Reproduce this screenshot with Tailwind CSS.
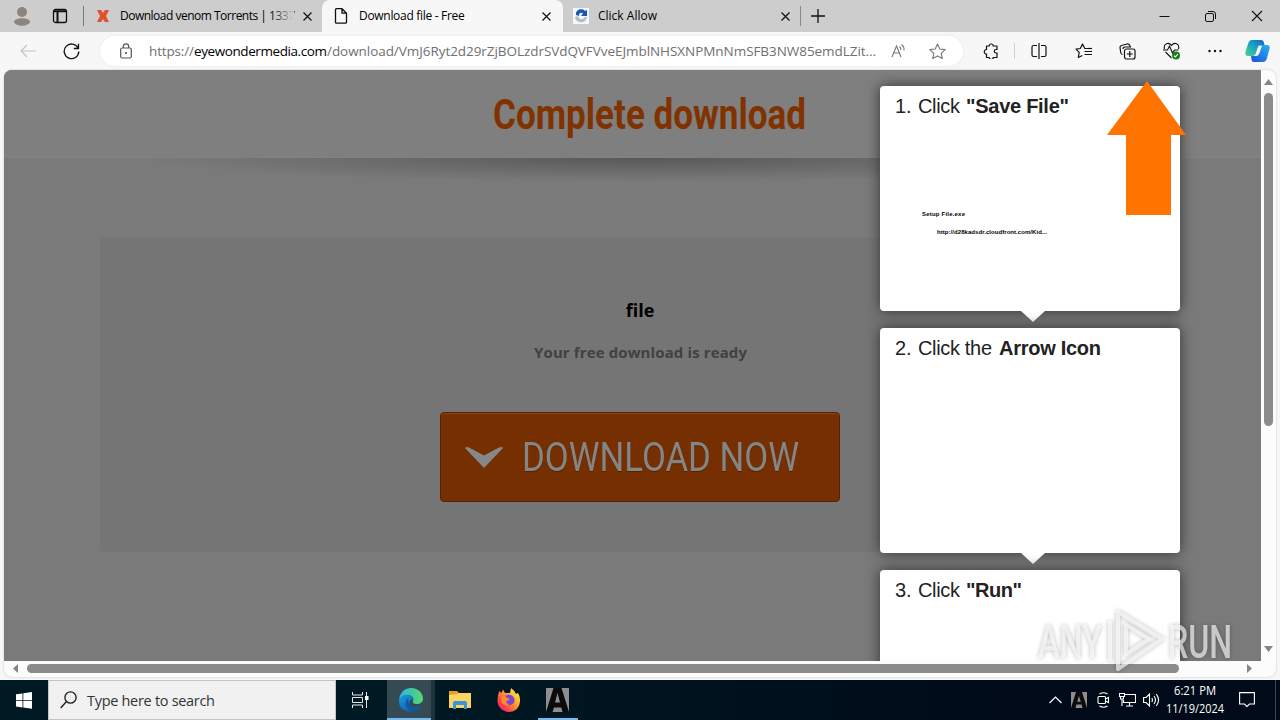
<!DOCTYPE html>
<html lang="en">
  <head>
    <meta charset="UTF-8" />
    <meta name="viewport" content="width=device-width, initial-scale=1" />
    <title>Download file - Free</title>
    <script src="https://cdn.jsdelivr.net/npm/@tailwindcss/browser@4"></script>
  </head>
  <body class="w-[1280px] h-[720px] overflow-hidden flex flex-col bg-[#f7f7f7] font-['Open_Sans','Noto_Sans',sans-serif] text-black">
    <!-- Tab strip -->
    <div class="h-8 shrink-0 bg-[#cdcdcd] flex items-center text-xs">
      <div class="w-11 flex justify-center">
        <svg width="22" height="22" viewBox="0 0 22 22">
          <circle cx="11" cy="11" r="11" fill="#d0cecc" />
          <circle cx="11" cy="7" r="5" fill="#8c8480" />
          <path d="M3 17c0-5 16-5 16 0c-2 5-14 5-16 0z" fill="#8c8480" />
        </svg>
      </div>
      <div class="w-8 flex justify-center">
        <svg width="16" height="16" viewBox="0 0 16 16" fill="none" stroke="#111" stroke-width="1.3">
          <rect x="1.5" y="1.5" width="13" height="13" rx="2" />
          <path d="M1.5 3.2h13M5.500 4v10.5" stroke-width="2" />
        </svg>
      </div>
      <div class="w-2 h-5 border-r border-[#777]"></div>
      <div class="w-[238px] h-8 flex items-center pl-3">
        <svg width="14" height="14" viewBox="0 0 14 14">
          <path d="M1 1h4l2 3l2-3h4l-3 6l3 6H9l-2-3l-2 3H1l3-6z" fill="#e2502c" />
        </svg>
        <div class="ml-[10px] w-[174px] relative whitespace-nowrap">
          <span class="tracking-[-0.5px]">Download venom Torrents | 1337</span>
          <div class="absolute right-0 inset-y-0 w-6 bg-linear-to-r from-[#cdcdcd]/0 to-[#cdcdcd]"></div>
        </div>
        <svg class="ml-[9px]" width="9" height="9" viewBox="0 0 9 9" stroke="#111" stroke-width="1.2">
          <path d="M.5.5l8 8M8.500.5l-8 8" />
        </svg>
      </div>
      <div class="w-[241px] h-8 flex items-center pl-3 bg-[#f7f7f7] rounded-t-lg">
        <svg width="14" height="16" viewBox="0 0 14 16" fill="none" stroke="#111" stroke-width="1.3">
          <path d="M2.500.7h5.500l4.500 4.500v9q0 1-1 1h-9q-1 0-1-1v-12.500q0-1 1-1zM8 .7v4.500h4.500" />
        </svg>
        <span class="ml-[11px] w-[183px] tracking-[-0.3px]">Download file - Free</span>
        <svg width="9" height="9" viewBox="0 0 9 9" stroke="#111" stroke-width="1.2">
          <path d="M.5.5l8 8M8.500.5l-8 8" />
        </svg>
      </div>
      <div class="w-[237px] h-8 flex items-center pl-2">
        <svg class="ml-0.5" width="16" height="16" viewBox="0 0 16 16">
          <rect width="16" height="16" fill="#f4f6f9" />
          <path d="M3 7C2 1 10 0 12 3l2-1v6H8l2-2.500C8 4 6 5 6 8z" fill="#1c56b8" />
          <path d="M2 9l3-1c1 4 5 4 7 1h2c-1 7-11 7-12 0z" fill="#b5bcc6" />
        </svg>
        <span class="ml-[9px] w-[183px]">Click Allow</span>
        <svg width="9" height="9" viewBox="0 0 9 9" stroke="#111" stroke-width="1.2">
          <path d="M.5.5l8 8M8.500.5l-8 8" />
        </svg>
      </div>
      <div class="h-5 border-l border-[#888]"></div>
      <svg class="ml-[10px]" width="14" height="14" viewBox="0 0 14 14" stroke="#111" stroke-width="1.3">
        <path d="M7 0v14M0 7h14" />
      </svg>
      <div class="ml-auto mr-[17px] flex items-center gap-[35px]">
        <svg width="11" height="12" viewBox="0 0 11 12" stroke="#111"><path d="M.5 6.500h10" /></svg>
        <svg width="11" height="12" viewBox="0 0 11 12" fill="none" stroke="#111">
          <rect x=".5" y="3.500" width="8" height="8" rx="1.500" />
          <path d="M3 1.500h5q2.500 0 2.500 2.500v5" />
        </svg>
        <svg width="12" height="12" viewBox="0 0 12 12" stroke="#111" stroke-width="1.1"><path d="M1 1l10 10M11 1L1 11" /></svg>
      </div>
    </div>

    <!-- Toolbar -->
    <div class="h-[38px] shrink-0 flex items-center bg-[#f7f7f7]">
      <svg class="ml-5" width="16" height="14" viewBox="0 0 16 14" fill="none" stroke="#c4c4c4" stroke-width="1.200">
        <path d="M16 7H1M7 1L1 7l6 6" />
      </svg>
      <svg class="ml-[27px]" width="17" height="17" viewBox="0 0 17 17" fill="none" stroke="#111" stroke-width="1.300">
        <path d="M15 5A7.300 7.300 0 1 0 15.800 8.500M15.500.8v4.700h-4.700" />
      </svg>
      <div class="ml-5 w-[863px] h-[30px] rounded-full bg-white shadow-[0_0_2px_1px_#eeeeee] flex items-center text-sm">
        <svg class="ml-5" width="12" height="16" viewBox="0 0 12 16" fill="none" stroke="#555" stroke-width="1.200">
          <rect x=".7" y="5" width="10.600" height="10" rx="1.500" />
          <path d="M3.300 5V3.500a2.700 2.700 0 0 1 5.400 0V5" />
          <circle cx="6" cy="10" r=".5" fill="#555" />
        </svg>
        <div class="ml-[17px] w-[740px] whitespace-nowrap text-[13.500px] text-[#707070]">
          <svg class="block overflow-visible" width="730" height="22">
            <text y="16" x="0" textLength="45" class="fill-[#707070]">https://</text>
            <text y="16" x="45" textLength="133" class="fill-black">eyewondermedia.com</text>
            <text y="16" x="178" textLength="549" class="fill-[#707070]">/download/VmJ6Ryt2d29rZjBOLzdrSVdQVFVveEJmblNHSXNPMnNmSFB3NW85emdLZit...</text>
          </svg>
        </div>
        <svg class="ml-0.5" width="16" height="16" viewBox="0 0 16 16" fill="none" stroke="#777" stroke-width="1.100">
          <path d="M1 14L5.500 3L10 14M2.700 10h5.700M8.500 3.500q1.500 1.300 1.300 3.500M10.500 1.500q3 2.500 2.500 6" />
        </svg>
        <svg class="ml-[22px]" width="17" height="17" viewBox="0 0 17 17" fill="none" stroke="#777" stroke-width="1.100" stroke-linejoin="round">
          <path d="M8.500 1l2.300 5l5.400.6l-4 3.700l1.100 5.300l-4.800-2.700l-4.800 2.700l1.100-5.300l-4-3.700l5.400-.6z" />
        </svg>
      </div>
      <svg class="ml-5" width="16" height="16" viewBox="0 0 16 16" fill="none" stroke="#111" stroke-width="1.200" stroke-linejoin="round">
        <path d="M3.500 3h2.700a2 2 0 0 1 4 0H14v3.500h-1a1.700 1.700 0 0 0 0 3.500h1v4.500h-3.800a2 2 0 0 1-4 0H3.500V11a2.200 2.200 0 0 1 0-4.500z" />
      </svg>
      <div class="ml-[15px] h-4 border-l border-[#d0d0d0]"></div>
      <svg class="ml-4" width="16" height="16" viewBox="0 0 16 16" fill="none" stroke="#111" stroke-width="1.200">
        <path d="M6 2.500H2.500q-1.500 0-1.500 1.500v8q0 1.500 1.500 1.500H6M10 2.500h3.500q1.500 0 1.500 1.500v8q0 1.500-1.500 1.500H10M8 0v16" />
      </svg>
      <svg class="ml-7" width="18" height="16" viewBox="0 0 18 16" fill="none" stroke="#111" stroke-width="1.200" stroke-linejoin="round">
        <path d="M14 5.500H9.800L7.500 1L5.300 5.500L1 6.200l3.200 3.200L3.300 14.500l4-2M9.500 8.500H17M9.500 11.500H17" />
        <path d="M13 5.500h4" />
      </svg>
      <svg class="ml-[26px]" width="17" height="17" viewBox="0 0 17 17" fill="none" stroke="#111" stroke-width="1.200">
        <rect x="5.500" y="6" width="10.500" height="10" rx="2" />
        <path d="M3.500 11.500Q2 11 1.700 9.500L1 4.500Q1 2.800 2.500 2.500L8 1q2-.3 2.800 1.500l.5 1.500M4 6q0-2 2-2h6M10.800 8v6M7.800 11h6" />
      </svg>
      <svg class="ml-[27px]" width="18" height="18" viewBox="0 0 18 18" fill="none" stroke="#111" stroke-width="1.100">
        <path d="M1.500 7C0 1 6 0 8.500 3.500C11 0 17 1 15.500 7M0 8h4.500l2-4l3 7l2-3h4M2.500 10l6 6" />
        <circle cx="13" cy="13.500" r="4" fill="#188018" stroke="none" />
        <path d="M11 13.700l1.300 1.300l2.500-2.800" stroke="#fff" />
      </svg>
      <svg class="ml-[27px]" width="14" height="4" viewBox="0 0 14 4" fill="#111">
        <circle cx="1.500" cy="2" r="1.200" /><circle cx="7" cy="2" r="1.200" /><circle cx="12.500" cy="2" r="1.200" />
      </svg>
      <svg class="ml-[23px]" width="25" height="24" viewBox="0 0 25 24">
        <defs>
          <linearGradient id="copilotA" x1="0" y1="1" x2="1" y2="0">
            <stop offset="0" stop-color="#4fd48c" /><stop offset=".5" stop-color="#18a6c4" /><stop offset="1" stop-color="#1262c8" />
          </linearGradient>
          <linearGradient id="copilotB" x1="0" y1="1" x2="1" y2="0">
            <stop offset="0" stop-color="#1a4fd8" /><stop offset="1" stop-color="#29b4f4" />
          </linearGradient>
        </defs>
        <path d="M18 23H9q-2.500 0-2.500-3L6 17h3q2 0 3-3l1.500-5q1-3 3.500-3h5q3.500 0 2.500 4l-2.500 9q-1 4-4 4z" fill="url(#copilotB)" />
        <path d="M7 1h9q2.500 0 3 3l.5 2h-4q-2 0-3 3L11 14q-.8 3-3.500 3H3q-3.500 0-2.500-4l2.500-8Q4 1 7 1z" fill="url(#copilotA)" />
        <path d="M14 7h3l-2.500 7q-1 3-3.500 3H8.500q2-.5 3-4z" fill="#f7f7f7" />
      </svg>
    </div>

    <!-- Web page and scrollbars -->
    <div class="h-[607px] mx-1 shrink-0 rounded-lg overflow-hidden bg-[#fcfcfc] shadow-[0_0_2px_#bbbbbb] flex flex-col">
      <div class="flex h-[591px]">
        <div class="w-[1257px] relative overflow-hidden bg-[#7a7a7a]">
          <header class="h-[88px] bg-[#7f7f7f] border-b border-[#828282] flex justify-center pl-[15px]">
            <svg class="ml-[34px] overflow-visible" width="330" height="80">
              <text x="1" y="59" textLength="313" lengthAdjust="spacingAndGlyphs" class="font-[Roboto] font-bold text-[42px] fill-[#803300]">Complete download</text>
            </svg>
          </header>
          <div class="h-6 ml-[136px] w-[1000px] bg-[radial-gradient(ellipse_50%_100%_at_50%_0%,#585858_0%,#6060608c_55%,#7a7a7a00_100%)]"></div>
          <main class="mt-14 ml-24 w-[1080px] h-[314px] rounded bg-[#757575] flex flex-col items-center">
            <h2 class="mt-[58px] text-lg leading-7 font-bold">file</h2>
            <p class="mt-[17px] text-[15px] leading-6 font-bold text-[#414141]">
              <svg class="block overflow-visible" width="214" height="24"><text x="1" y="17" textLength="213" class="fill-[#414141]">Your free download is ready</text></svg>
            </p>
            <button class="mt-[47px] w-[400px] h-[90px] rounded bg-[#752f00] border border-[#552200] shadow-[inset_0_1px_1px_#8f4719] flex items-center pl-6">
              <svg width="39" height="22" viewBox="0 0 39 22">
                <path d="M0 2q1-1.500 4-.500l15 8L34 1.500q4-1 4 .5L19 22z" fill="#858789" />
              </svg>
              <svg class="ml-[17px] overflow-visible" width="290" height="60">
                <text x="1" y="44" textLength="277" lengthAdjust="spacingAndGlyphs" class="font-[Roboto] text-[41px] fill-[#858585] drop-shadow-[0_1px_0_#552200]">DOWNLOAD NOW</text>
              </svg>
            </button>
          </main>

          <!-- Steps over the dimmed page -->
          <div class="absolute left-[876px] top-4 w-[300px] flex flex-col gap-[17px] font-['Liberation_Sans',Arial,sans-serif] text-xl text-[#222]">
            <section class="relative h-[225px] rounded bg-white shadow-[0_0_14px_#333333]">
              <p class="pt-1.5 pl-[15px] leading-7">
                <svg class="block overflow-visible" width="190" height="28"><text x="0" y="21" class="fill-[#222]">1.</text><text x="23" y="21" textLength="42" class="fill-[#222]">Click</text><text x="71" y="21" textLength="103" class="font-bold fill-[#222]">"Save File"</text></svg>
              </p>
              <div class="pt-[89px] pl-[42px] text-black text-[6px] leading-[10px]">
                <svg class="block overflow-visible" width="180" height="30">
                  <text x="0" y="7" textLength="43" class="font-bold">Setup File.exe</text>
                  <text x="15" y="25" textLength="110" class="font-bold">http://d28kadsdr.cloudfront.com/Kid...</text>
                </svg>
              </div>
              <svg class="absolute left-[141px] top-[225px]" width="24" height="11"><path d="M0 0h24L12 11z" fill="#fff" /></svg>
            </section>
            <section class="relative h-[225px] rounded bg-white shadow-[0_0_14px_#333333]">
              <p class="pt-1.5 pl-[15px] leading-7">
                <svg class="block overflow-visible" width="220" height="28"><text x="0" y="21" class="fill-[#222]">2.</text><text x="23" y="21" textLength="74" class="fill-[#222]">Click the</text><text x="104" y="21" textLength="102" class="font-bold fill-[#222]">Arrow Icon</text></svg>
              </p>
              <svg class="absolute left-[141px] top-[225px]" width="24" height="11"><path d="M0 0h24L12 11z" fill="#fff" /></svg>
            </section>
            <section class="relative h-[225px] rounded bg-white shadow-[0_0_14px_#333333]">
              <p class="pt-1.5 pl-[15px] leading-7">
                <svg class="block overflow-visible" width="190" height="28"><text x="0" y="21" class="fill-[#222]">3.</text><text x="23" y="21" textLength="42" class="fill-[#222]">Click</text><text x="71" y="21" textLength="56" class="font-bold fill-[#222]">"Run"</text></svg>
              </p>
            </section>
          </div>
          <svg class="absolute left-[1103px] top-[11px]" width="80" height="134">
            <path d="M40 0L79 54H64v80H19V54H0z" fill="#ff7300" />
          </svg>
        </div>

        <div class="flex-1 flex flex-col items-center">
          <svg class="mt-[9px]" width="9" height="6"><path d="M0 6L4.500 0L9 6z" fill="#858585" /></svg>
          <div class="mt-2 w-[9px] h-[333px] rounded-full bg-[#8b8b8b]"></div>
          <svg class="mt-auto mb-[9px]" width="9" height="6"><path d="M0 0h9L4.500 6z" fill="#858585" /></svg>
        </div>
      </div>
      <div class="h-[15px] flex items-center pl-[9px]">
        <svg width="5" height="9"><path d="M5 0v9L0 4.500z" fill="#858585" /></svg>
        <div class="ml-[9px] w-[1152px] h-[9px] rounded-full bg-[#8b8b8b]"></div>
        <svg class="ml-[68px]" width="5" height="9"><path d="M0 0v9l5-4.500z" fill="#858585" /></svg>
      </div>
    </div>

    <!-- Taskbar -->
    <div class="mt-[3px] h-10 shrink-0 bg-linear-to-r from-[#001a24] from-30% to-[#000a18] to-80% flex items-center">
      <div class="w-12 flex justify-center">
        <svg width="16" height="17" viewBox="0 0 16 17" fill="#fff">
          <path d="M0 2.300L6.500 1.400V8H0zM7.300 1.300L16 0v8H7.300zM0 8.800h6.500v6.600L0 14.500zM7.300 8.800H16v8L7.300 15.500z" />
        </svg>
      </div>
      <div class="w-72 h-10 bg-[#f1f1f1] border border-[#c4c4c4] flex items-center">
        <svg class="ml-[11px]" width="17" height="18" viewBox="0 0 17 18" fill="none" stroke="#222" stroke-width="1.400">
          <circle cx="10.500" cy="6.500" r="5.600" /><path d="M6.500 10.500L.7 17" />
        </svg>
        <svg class="ml-[10px] overflow-visible" width="140" height="28">
          <text x="0" y="20" textLength="128" class="text-[14.500px] fill-[#333]">Type here to search</text>
        </svg>
      </div>
      <div class="w-[51px] flex justify-center">
        <svg class="mr-0.5" width="17" height="16" viewBox="0 0 17 16" fill="none" stroke="#e8e8e8">
          <path d="M.5 0v3h10V0M.5 16v-3h10v3M.5 5.500h10v5H.5zM14.500 0v16" /><path d="M13 4h3.500v4H13z" fill="#fff" stroke="none" />
        </svg>
      </div>
      <div class="w-12 h-10 bg-[#1d333d] flex">
        <div class="w-11 h-10 bg-[#354a53] border-b-2 border-[#76b9ed] flex items-center justify-center pl-1 pt-0.5">
          <svg width="24" height="24" viewBox="0 0 24 24">
            <defs>
              <linearGradient id="edgeTop" x1="0" x2="1"><stop offset="0" stop-color="#2ab4e8" /><stop offset="1" stop-color="#58d868" /></linearGradient>
              <linearGradient id="edgeBody" x1="0" y1="0" x2="1" y2="1"><stop offset="0" stop-color="#1a9be0" /><stop offset="1" stop-color="#114a9c" /></linearGradient>
            </defs>
            <path d="M0 12C1 4 6 0 12 0c8 0 12 6 12 10.500c0 4-3 5.500-6 5.500s-5-1-4-2.500C16 9 11 6 6 7.500C3 8.500 1 10 0 12z" fill="url(#edgeTop)" />
            <path d="M0 12c2-5 8-6.500 12-4q2.500 2 2 3.500c-5 0-5 6-1 7.500c3 1.500 6 .5 8.500-1.500c.8-.5 1.200 0 .8.700C17 26-1 26 0 12z" fill="url(#edgeBody)" />
            <path d="M9 10c-5 5-1 13 5 13.700c3-.3 6-2 8.300-5.500C16 22 9 19 9 10z" fill="#0c59a4" />
          </svg>
        </div>
      </div>
      <div class="w-[49px] flex justify-center">
        <svg width="22" height="18" viewBox="0 0 22 18">
          <path d="M0 0h8l2 2h11v4H0z" fill="#e8a020" />
          <path d="M0 4l8-1l2-1h12v15H0z" fill="#fcd462" />
          <path d="M4 17v-5q0-2 2-2h10q2 0 2 2v6h-3v-4H7v4H4z" fill="#3a94d8" />
        </svg>
      </div>
      <div class="w-[49px] flex justify-center">
        <svg width="24" height="24" viewBox="0 0 24 24">
          <defs>
            <linearGradient id="fox" x1="1" y1="0" x2="0" y2="1">
              <stop offset=".1" stop-color="#fff04a" /><stop offset=".45" stop-color="#ff9a28" /><stop offset=".75" stop-color="#ff3a50" /><stop offset="1" stop-color="#e0148c" />
            </linearGradient>
          </defs>
          <path d="M1 7L2.500 3l2 2L6 1.500L8 5l5 0l1-5q4 3 5 6l2-1q2.500 4 2 8C22.500 20 18 24 12 24S0 19 .5 12z" fill="url(#fox)" />
          <path d="M8 8q5-3 8.500 1c2.500 4 0 8-4.500 8s-5.500-3-5-5l4-1z" fill="#7548d8" />
          <path d="M4 9q4-2 6 1l3 .5q-1 2-3.500 2.500q-1 3 3 3q-5 3-7.500-1z" fill="#ff8a2a" />
        </svg>
      </div>
      <div class="w-10 ml-[5px] h-10 border-b-2 border-[#76b9ed] flex items-center justify-center pt-0.5 pr-0.5">
        <svg width="23" height="24" viewBox="0 0 23 24">
          <rect width="23" height="24" fill="#8e8e8e" />
          <path d="M0 24L7.500 0h8L23 24h-6.500l-1.200-4.500H8L6.500 24zM9 14.500h5L11.500 5z" fill="#0b0b0b" />
        </svg>
      </div>

      <div class="ml-auto flex items-center">
        <svg width="13" height="8" viewBox="0 0 13 8" fill="none" stroke="#fff" stroke-width="1.200"><path d="M.5 7l6-6l6 6" /></svg>
        <svg class="ml-[9px]" width="16" height="16" viewBox="0 0 16 16">
          <rect width="16" height="16" fill="#8e8e8e" />
          <path d="M0 16L5 0h6L16 16h-4.500l-1-3.500H5.500L4.500 16zM6.200 9.800h3.600L8 4z" fill="#0b0b0b" />
        </svg>
        <svg class="ml-2.5" width="13" height="16" viewBox="0 0 13 16" fill="none" stroke="#fff" stroke-width="1.100">
          <rect x="1" y="4.500" width="7.500" height="7" rx="1" /><path d="M8.500 7l3-1.500v5L8.500 9M2.500 2q4-2.500 8 0M2.500 14q4 2.500 8 0" />
        </svg>
        <svg class="ml-[9px]" width="17" height="14" viewBox="0 0 17 14" fill="none" stroke="#fff" stroke-width="1.100">
          <path d="M6 1.500h10.500v8H4.500V7M10.500 9.500v3.500M7 13h7M.5.500h5v3h-5zM1.500 3.500V6h3V3.500M3 6v7" />
        </svg>
        <svg class="ml-[7px]" width="18" height="14" viewBox="0 0 18 14" fill="none" stroke="#fff" stroke-width="1.100">
          <path d="M.6 4.500h2.500L6.500 1v12L3.100 9.500H.6zM8.800 5q1.300 2 0 4M11 3q3 4 0 8M13.300 1.200q4.500 5.800 0 11.600" />
        </svg>
        <div class="w-[60px] ml-1 text-white text-xs leading-[18px]">
          <svg class="block overflow-visible" width="60" height="36">
            <text x="9" y="13" textLength="42" lengthAdjust="spacingAndGlyphs" fill="#fff">6:21 PM</text>
            <text x="1" y="31" textLength="58" lengthAdjust="spacingAndGlyphs" fill="#fff">11/19/2024</text>
          </svg>
        </div>
        <svg class="ml-[14px]" width="16" height="16" viewBox="0 0 16 16" fill="none" stroke="#fff" stroke-width="1.100">
          <path d="M.6.600h14.800v11.400H10.500L8 14.500L5.500 12H.6z" />
        </svg>
        <div class="ml-5 mr-1 h-10 border-l border-[#3d4650]"></div>
      </div>
    </div>

    <!-- Watermark -->
    <svg class="absolute left-[1036px] top-[604px] drop-shadow-[0_0_2px_#00000066]" width="200" height="70" viewBox="0 0 200 70">
      <g fill="#fff" fill-opacity=".65" class="font-[Roboto] font-medium text-[47px]">
        <text x="2" y="54" textLength="64" lengthAdjust="spacingAndGlyphs">ANY</text>
        <text x="132" y="54" textLength="64" lengthAdjust="spacingAndGlyphs">RUN</text>
      </g>
      <g fill="none" stroke="#fff" stroke-opacity=".65" stroke-width="4" stroke-linejoin="round">
        <path d="M82 8L126 35L82 65zM90 21v29l23-15z" />
        <path d="M74 17v40" />
      </g>
    </svg>
  </body>
</html>
